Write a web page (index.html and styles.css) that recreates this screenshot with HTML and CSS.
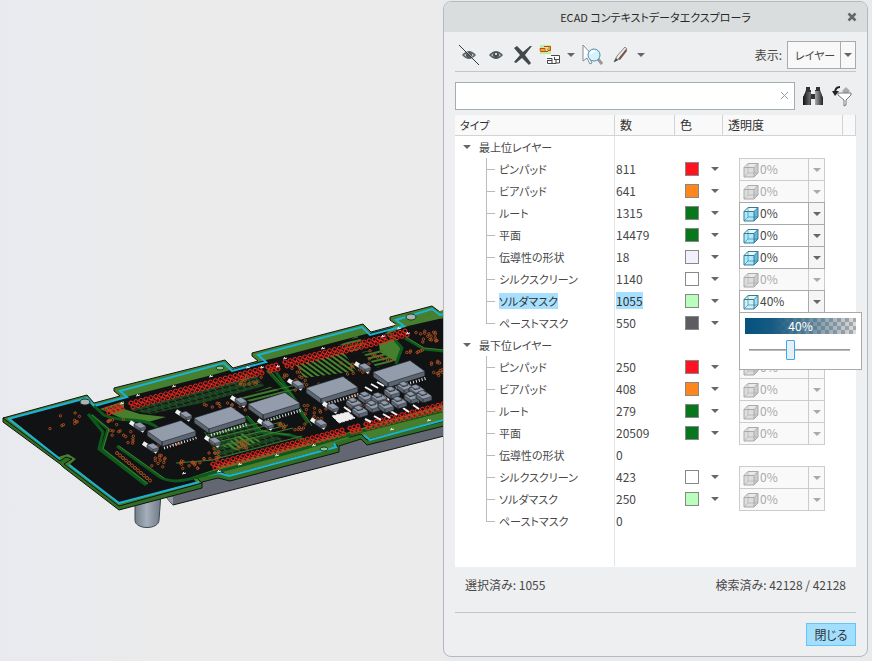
FILE: index.html
```html
<!DOCTYPE html>
<html lang="ja">
<head>
<meta charset="utf-8">
<meta name="viewport" content="width=device-width, initial-scale=1">
<title>ECAD コンテキストデータエクスプローラ</title>
<link rel="stylesheet" href="styles.css">
</head>
<body>
<svg width="0" height="0" class="defs" aria-hidden="true">
  <symbol id="cube" viewBox="0 0 16 16">
    <path d="M5 1.500h10l-4.500 4H1z" fill="var(--top)"/>
    <path d="M15 1.500v9.500l-4 4V5.500z" fill="var(--side)"/>
    <path d="M1 5.500h10V15H1z" fill="var(--front)"/>
    <path d="M5 1.500h10v9.500l-4 4H1V5.500zM1 5.500h10V15M11 5.500l4-4" fill="none" stroke="var(--edge)"/>
    <path d="M5 1.500V11h10M5 11l-4 4" fill="none" stroke="var(--edge)" opacity=".6"/>
  </symbol>
</svg>
<main class="workspace">
  <section class="scene" aria-label="基板モデル">
    <svg viewBox="0 0 444 661" preserveAspectRatio="xMinYMin slice" role="img">
      <defs>
        <linearGradient id="metal"><stop offset="0" stop-color="#747f8c"/><stop offset=".45" stop-color="#a5aebb"/><stop offset="1" stop-color="#707887"/></linearGradient>
        <pattern id="mesh" width="7" height="5" patternUnits="userSpaceOnUse" patternTransform="rotate(-15)">
          <path d="M0 1h7M0 4h7M1 0l3 5" stroke="#24652a" fill="none"/>
        </pattern>
        <pattern id="lines" width="4" height="4" patternUnits="userSpaceOnUse" patternTransform="rotate(-14)">
          <path d="M0 1h4" stroke="#3d7a2a" stroke-width="2"/>
        </pattern>
        <pattern id="rungs" width="4" height="4" patternUnits="userSpaceOnUse" patternTransform="rotate(36)">
          <path d="M0 1h4" stroke="#48862e" stroke-width="2"/>
        </pattern>
      </defs>
      <path d="M135 500v20c0 10 24 10 24 0l2-26z" fill="url(#metal)" stroke="#3e4650"/>
      <path d="M166 497l7 8 271-69v-28l-245 66z" fill="#626771" stroke="#111"/>
      <path d="M166 497l7 8v-8z" fill="#9299a4"/>
      <path d="M3 418v4L60 464L63 467L119 510L202 488V482L218 478L230 481L339 452V446L361 439L367 445L444 426V380z" fill="#306d25" stroke="#101510"/>
      <path d="M3 418L87 395L94 403L120 396L114 391V388L225 360L233 368L258 361L252 356V353L363 324L371 332L397 325L390 320V317L432 306L440 312L444 311V421L367 440L361 434L332 442L338 446L228 476L219 470L196 477L202 483L119 506L64 464L72 459L66 457L60 461z" fill="#467f2e" stroke="#101510"/>
      <path d="M10 418L86 398L93 406L130 396L216 374L262 361L275 358L362 335L398 326L415 322L444 318V404L362 428L340 435L280 452L213 470L192 477L196 482L119 503L70 464L76 459L68 454L58 457z" fill="#111214"/>
      <path d="M384 335L399 322L425 316L443 310V318L408 326z" fill="#467f2e"/>
      <path d="M100 409L124 401L124 409L140 414L166 417L148 422L121 418z" fill="#467f2e"/>
      <path d="M130 410L256 375L264 386L206 402L150 414z" fill="url(#mesh)"/>
      <path d="M240 397l30-10 24 8-28 14z" fill="url(#lines)"/>
      <path d="M204 432l42-10 39 18-67 18z" fill="url(#mesh)"/>
      <path d="M222 446l21-13 18 8-25 9z" fill="url(#rungs)"/>
      <path d="M296 365l47-13 14 19-53 7z" fill="url(#rungs)"/>
      <path d="M340 345l17-9 9 8-12 9z" fill="url(#lines)"/>
      <path d="M379 344L395 338L402 352L396 362L380 352z" fill="#467f2e"/>
      <path d="M362 352l20-3 12 12-17 7z" fill="url(#lines)"/>
      <path d="M213 467L340 434L350 438L268 461L230 471z" fill="#467f2e"/>
      <path d="M368 431L444 411V417L376 434z" fill="#467f2e"/>
      <path d="M8 419L87 398L94 406L127 397L120 391L224 363L232 371L266 362L258 355L362 327L370 335L404 326L396 320L432 309L440 315L444 314" fill="none" stroke="#1ab2d8" stroke-width="2"/>
      <path d="M9 419L60 459M69 465L119 503L199 482M208 475L219 473L229 476L336 447L334 443M364 435L370 440L444 420" fill="none" stroke="#1ab2d8" stroke-width="2"/>
      <g fill="none" stroke="#0d591b" stroke-width="3">
        <path d="M91 415l17 14-6 20 45 35"/><path d="M88 414l15 18-4 17 47 36"/>
        <path d="M117 446l43 31c14 8 30 2 45-2l97-26 60-18 80-20"/>
        <path d="M94 406l10 9c18 9 40 0 55 14M267 370l21 23 20 30M276 372l22 32M246 416l14 16 30 3 27 9M390 334l12 14-6 16M405 338l19 11 20 2"/>
      </g>
      <g fill="none" stroke="#3f7d30">
        <path d="M92 415l17 14-6 20 45 35M119 446l45 32M269 370l22 24 21 32M406 337l18 11 20 2M248 416l14 15 28 4M212 460l90-24M176 463l37-3"/>
        <path d="M208 435l72-17M210 439l72-17M213 443l75-18M216 447l77-19M270 391l35-8M275 394l30-7"/>
      </g>
      <g id="pads" fill="none"></g>
      <g id="parts" stroke="#15191e" stroke-linejoin="round"></g>
      <g fill="#aab3b8" stroke="#173c1c"><ellipse cx="85" cy="402" rx="5" ry="3"/><ellipse cx="220" cy="368" rx="4" ry="2" fill="#8bc292"/><ellipse cx="324" cy="449" rx="4" ry="2" fill="#8bc292"/><ellipse cx="411" cy="317" rx="5" ry="3"/></g>
    </svg>
  </section>

  <section class="dialog" role="dialog" aria-labelledby="dialog-title">
    <header class="titlebar">
      <h1 id="dialog-title">ECAD コンテキストデータエクスプローラ</h1>
      <button class="icon-button window-close" aria-label="ウィンドウを閉じる"><svg width="10" height="10"><path d="M1.500 1.500l7 7m0-7l-7 7" stroke="#666" stroke-width="2.500"/></svg></button>
    </header>
    <div class="content">
      <div class="toolbar">
        <button class="icon-button" aria-label="非表示"><svg width="22" height="22" viewBox="0 0 22 22"><path d="M4 11q7-8 14 0-7 8-14 0" fill="#5d6367"/><path d="M6 11q5-5 10 0-5 5-10 0" fill="#bfc5c8"/><circle cx="11" cy="11" r="3" fill="#50565a"/><path d="M3 2l18 19" stroke="#eef0f1" stroke-width="1"/><path d="M1 1l20 20" stroke="#34383a"/></svg></button>
        <button class="icon-button" aria-label="表示"><svg width="22" height="22" viewBox="0 0 22 22"><path d="M4 11q7-8 14 0-7 8-14 0" fill="#555d62"/><path d="M6 11q5-5 10 0-5 5-10 0" fill="#b5bcc0"/><circle cx="11" cy="11" r="3" fill="#4a5155"/><circle cx="11" cy="10" r="1" fill="#fff"/></svg></button>
        <button class="icon-button" aria-label="削除"><svg width="22" height="22" viewBox="0 0 22 22"><path d="M2 4l3-2 6 6 7-6 2 0-7 9 6 8-2 2-7-7-6 5-2-1 6-7z" fill="#45484b"/></svg></button>
        <button class="icon-button with-menu" aria-label="選択方法"><svg width="22" height="22" viewBox="0 0 22 22"><path d="M1 1h11v9H1z" fill="#bfeaa8"/><path d="M5 2.500h6.500v4H9v-2M1 4.500h5v3H1.500zM6 7.500h3" fill="none" stroke="#c84a08"/><path d="M2 5h3v2H2zM9 3h2v3H9z" fill="#f2a72e"/><path d="M7 11h14v10H7z" fill="#fafafa"/><path d="M12 11.500h8.500v4H15M8 14.500h5v5H8.500v-3M13 19.500h4v-4M8 16.500h5M15.500 13v2.500M20.500 15v4H17" fill="none" stroke="#47484b"/></svg><i class="arrow"></i></button>
        <button class="icon-button" aria-label="検索して選択"><svg width="22" height="22" viewBox="0 0 22 22"><path d="M1 1v16l4-3 3 6 2-1-3-6h5z" fill="#fff" stroke="#858b90"/><path d="M16 15l4 5" stroke="#999" stroke-width="3"/><circle cx="12" cy="11" r="6" fill="#d5f3fa" stroke="#4a8faf"/><path d="M9 10q1-3 4-3" fill="none" stroke="#fff" stroke-width="2"/></svg></button>
        <button class="icon-button with-menu" aria-label="編集"><svg width="22" height="22" viewBox="0 0 22 22"><path d="M5 18l3-6 8-9 2 2-8 10z" fill="#e9e9e9" stroke="#888"/><path d="M9 15l8-10 1 2-7 9z" fill="#75564b"/><path d="M5 18l2-4 2 2z" fill="#444"/></svg><i class="arrow"></i></button>
        <label class="view-label" for="view">表示:</label>
        <span class="dropdown view"><select id="view"><option>レイヤー</option></select><i class="arrow"></i></span>
      </div>
      <div class="search-row">
        <div class="search"><input type="text" aria-label="検索"><button class="icon-button" aria-label="クリア"><svg width="10" height="10"><path d="M1 1l7 7m0-7L1 8" stroke="#9aa0a3"/></svg></button></div>
        <button class="icon-button" aria-label="検索"><svg width="22" height="22" viewBox="0 0 22 22"><defs><linearGradient id="lens"><stop stop-color="#111"/><stop offset=".6" stop-color="#aaa"/><stop offset="1" stop-color="#222"/></linearGradient></defs><path d="M4 2h4v3h1v4h4V5h1V2h4v3l3 8v7h-8v-6H9v6H1v-7l3-8z" fill="#333"/><path d="M1 12l3-5h5l-1 13H1zM13 10V6h5l3 7v7h-8z" fill="url(#lens)"/></svg></button>
        <button class="icon-button" aria-label="フィルタ"><svg width="22" height="22" viewBox="0 0 22 22"><path d="M11 6l4-4 4 4-2 2h-4z" fill="#aaa"/><path d="M7 8h13v2l-5 5v5l-2 1v-6L7 10z" fill="#fff" stroke="#777"/><path d="M9 2Q4 2 4 8" fill="none" stroke="#222" stroke-width="2"/><path d="M1 6h7l-4 5z" fill="#222"/></svg></button>
      </div>
      <div class="grid">
        <table>
          <colgroup><col class="c-type"><col class="c-count"><col class="c-color"><col class="c-alpha"><col></colgroup>
          <thead><tr><th>タイプ</th><th>数</th><th>色</th><th>透明度</th><th></th></tr></thead>
          <tbody id="rows"></tbody>
        </table>
      </div>
      <div class="status"><span>選択済み: 1055</span><span>検索済み: 42128 / 42128</span></div>
      <footer><button class="close">閉じる</button></footer>
    </div>
  </section>
</main>
<script src="board.js"></script>
<script src="table.js"></script>
</body>
</html>
```
FILE: styles.css
```css
* { box-sizing: border-box; }
body {
  margin: 0;
  background: #e9eaec;
  color: #484848;
  font: 12px/16px "Noto Sans CJK JP", sans-serif;
  font-feature-settings: "palt";
}
button, input, select { font: inherit; color: inherit; font-feature-settings: inherit; }
button { padding: 0; }
.defs { position: absolute; }
.workspace { display: flex; min-height: 100vh; align-items: flex-start; }
.scene { flex: 1 1 0; min-width: 0; overflow: hidden; background: linear-gradient(90deg, #e8eaef, #ebebeb 40%); height: 100vh; }
.scene svg { display: block; width: 100%; height: 100%; }
.dialog {
  flex: 0 1 425px;
  margin: 1px 4px 3px 0;
  border: 1px solid #b5b9bd;
  border-radius: 8px;
  background: #eeeff1;
  overflow: hidden;
}
.titlebar { display: flex; align-items: center; height: 30px; padding: 0 10px 0 20px; background: #dadddd; color: #282828; }
.titlebar h1 { flex: 1; margin: 0; text-align: center; font-size: 11px; font-weight: 400; }
.icon-button { display: inline-flex; align-items: center; justify-content: center; border: 0; background: none; flex: none; }
.icon-button svg { display: block; }
.content { padding: 0 11px; }
.toolbar { display: flex; align-items: center; gap: 5px; height: 40px; padding: 7px 0 0 3px; border-bottom: 1px solid #c2c6c8; }
.with-menu { gap: 6px; margin-right: 2px; }
.arrow { width: 0; height: 0; border: 4px solid transparent; border-top-color: #666; border-bottom: 0; }
.view-label { margin-left: auto; }
.dropdown { position: relative; display: inline-flex; align-items: center; }
.dropdown select { appearance: none; width: 100%; height: 100%; border: 1px solid #aaa; border-radius: 0; outline: 0; }
.dropdown .arrow { position: absolute; right: 4px; pointer-events: none; }
.view { width: 69px; height: 28px; margin-bottom: 1px; }
.view select { padding: 0 16px 0 7px; font-size: 11px; background: linear-gradient(90deg, transparent calc(100% - 15px), #aaa 0, #aaa calc(100% - 14px), transparent 0) #f8f8f8; }
.search-row { display: flex; align-items: center; gap: 7px; padding: 10px 3px 5px 0; }
.search { flex: 1; display: flex; height: 28px; border: 1px solid #a2afb2; background: #fff; padding-right: 4px; }
.search input { flex: 1; min-width: 0; border: 0; outline: 0; background: none; }
.grid { min-height: 452px; background: #fff; }
table { width: 100%; table-layout: fixed; border-collapse: separate; border-spacing: 0; }
.c-type { width: 160px; }
.c-count { width: 60px; }
.c-color { width: 48px; }
.c-alpha { width: 120px; }
th { height: 21px; padding: 0 5px; border-right: 1px solid #d0d4d4; border-bottom: 1px solid #d0d4d4; background: #f9f9f9; color: #303030; text-align: left; font-weight: 400; }
td { height: 22px; padding: 0 1px; white-space: nowrap; }
td:first-child { border-right: 1px solid #e2e5e7; }
.filler td { height: 34px; }
th:first-child { font-size: 11px; }
.group-label { display: flex; align-items: center; gap: 8px; padding-left: 7px; font-size: 11px; }
.tree-item { display: flex; align-items: center; height: 22px; padding-left: 30px; font-size: 11px; }
.branch { flex: none; width: 12px; height: 22px; margin-right: 1px; background: linear-gradient(#bbb, #bbb) 0 0 / 1px 100% no-repeat, linear-gradient(#bbb, #bbb) 0 11px / 9px 1px no-repeat; }
.last .branch { background-size: 1px 11px, 9px 1px; }
.selected mark { background: #a7dfff; color: #303030; }
mark { background: none; color: inherit; }
.color-button { display: flex; align-items: center; gap: 12px; margin-left: 9px; border: 0; background: none; }
.swatch { width: 14px; height: 14px; border: 1px solid #888; }
.alpha { padding-left: 16px; }
.alpha-box { width: 86px; height: 23px; margin-bottom: -1px; vertical-align: top; --top: #e5fbff; --side: #62b9dc; --front: #aceaff; --edge: #397a91; }
.alpha-box svg { position: absolute; left: 4px; width: 16px; height: 16px; pointer-events: none; }
.alpha-box select { padding: 0 16px 2px 20px; background: linear-gradient(90deg, transparent calc(100% - 16px), #aaa 0, #aaa calc(100% - 15px), #f5f5f5 0) #fff; }
.alpha-box.disabled { --top: #e9e9e9; --side: #ccc; --front: #ddd; --edge: #aaa; }
.disabled select { opacity: 1; color: #aaa; border-color: #ccc; background: linear-gradient(90deg, transparent calc(100% - 16px), #ccc 0, #ccc calc(100% - 15px), transparent 0) #f9f9f9; }
.disabled .arrow { border-top-color: #aaa; }
.alpha-box:not(.disabled) { z-index: 1; }
.alpha-box.open { z-index: 3; --top: #dff6fb; --side: #a9dff0; --front: #cdf1fb; }
.popup { position: absolute; top: 22px; left: 0; width: 123px; height: 58px; padding: 5px; border: 1px solid #aaa; background: #fff; }
.meter { display: block; height: 16px; color: #fff; text-align: center; background: linear-gradient(90deg, #04527f, #175b83 25%, #285f8199 60%, #6a7f9500), repeating-conic-gradient(#aaa 0 25%, #ddd 0 50%) 0 0 / 8px 8px; }
.popup input { appearance: none; display: block; width: 101px; height: 20px; margin: 6px 4px; background: linear-gradient(#888, #ccc) 0 9px / 100% 2px no-repeat; }
.popup input::-webkit-slider-thumb { appearance: none; width: 9px; height: 20px; border: 1px solid #39a9ec; border-radius: 1px; background: #e5f0f6; }
.status { display: flex; justify-content: space-between; padding: 10px 10px 19px; border-bottom: 1px solid #c2c4c7; }
footer { display: flex; justify-content: flex-end; padding: 10px 0; }
.close { width: 50px; height: 23px; border: 1px solid #66c4f7; background: #a2dfff; color: #333; }
```
FILE: board.js
```js
const pads = document.getElementById('pads');
const parts = document.getElementById('parts');
let seed = 7;
const rnd = () => (seed = (seed * 16807) % 2147483647) / 2147483647;
const add = (parent, d, attrs = {}) => {
  const p = document.createElementNS('http://www.w3.org/2000/svg', 'path');
  p.setAttribute('d', d);
  for (const k in attrs) p.setAttribute(k, attrs[k]);
  parent.append(p);
};
const ring = (x, y, r) => `M${x - r} ${y}a${r} ${r} 0 1 0 ${2 * r} 0a${r} ${r} 0 1 0 ${-2 * r} 0`;

// Connector rows: two staggered lines of red pads
[[107, 409, 120, 405], [131, 403, 260, 369], [268, 367, 276, 365], [285, 362, 384, 337], [390, 335, 405, 331],
 [213, 464, 342, 430], [350, 428, 358, 426], [366, 424, 443, 404]].forEach(([x1, y1, x2, y2]) => {
  const n = Math.max(2, Math.round((x2 - x1) / 5));
  for (let i = 0; i <= n; i++) {
    const x = x1 + (x2 - x1) * i / n, y = y1 + (y2 - y1) * i / n;
    add(pads, `M${x - 3} ${y}l7 4`, { stroke: '#6b1712', 'stroke-width': 2 });
    add(pads, ring(x, y, 2) + ring(x + 2, y + 4, 2), { stroke: '#f5281e' });
  }
});
// Clusters of vias: centre, spread, count
[[68, 421, 18, 9, 10], [122, 435, 13, 10, 13], [112, 422, 14, 3, 7], [158, 460, 8, 9, 12], [190, 465, 10, 4, 14],
 [252, 380, 12, 5, 12], [292, 373, 10, 5, 9], [220, 406, 26, 4, 14], [170, 444, 20, 4, 9], [292, 427, 14, 3, 12],
 [305, 385, 14, 6, 11], [355, 369, 14, 6, 10], [375, 355, 18, 5, 9], [427, 337, 11, 6, 18], [436, 369, 7, 8, 12],
 [415, 352, 9, 2, 7], [229, 445, 20, 4, 12], [315, 412, 12, 7, 12], [385, 403, 36, 8, 18], [210, 455, 12, 5, 12]
].forEach(([x, y, w, h, n]) => {
  for (let i = 0; i < n; i++) add(pads, ring(x + (rnd() * 2 - 1) * w, y + (rnd() * 2 - 1) * h, 1.2), { stroke: '#a94f20' });
});
for (let i = 0; i < 12; i++) add(pads, ring(117 + i * 3, 453 + i * 2.5, 1.5), { stroke: '#a94f20' });
// Silkscreen marks
[[138, 395], [174, 386], [211, 376], [248, 367], [285, 358], [323, 348], [399, 328], [240, 464], [277, 455], [314, 445], [392, 429], [429, 420], [219, 471], [184, 473], [122, 403], [262, 367], [278, 366], [383, 336], [408, 333]]
  .forEach(([x, y]) => add(pads, `M${x - 2} ${y + 1}l4-1M${x - 1} ${y - 1}l2 2`, { stroke: '#e5e5e5' }));

const block = (x, y, w, d, h, line = 1) => {
  const s = w * .31;
  const tip = d * .72;
  add(parts, `M${x} ${y}l${w}${-s}l${d} ${tip}v${h}l${-w} ${s}l${-d}${-tip}z`, { fill: '#5c6470', 'stroke-width': line });
  add(parts, `M${x} ${y}l${w}${-s}l${d} ${tip}l${-w} ${s}z`, { fill: '#929cab', 'stroke-width': line / 2 });
  add(parts, `M${x + d} ${y + tip}v${h}`, { 'stroke-width': line });
};
// Integrated circuits with their pin rows
[[147, 431], [194, 418], [248, 404], [306, 388], [373, 372]].forEach(([x, y], i) => {
  const w = i ? 37 : 34;
  add(parts, `M${x + 17} ${y + 17}l${w}-11`, { stroke: '#e2e4e5', 'stroke-width': 3, 'stroke-dasharray': '1 2' });
  block(x, y, w, 15, 5);
});
// Small passives
[[134, 424], [147, 445], [180, 413], [209, 439], [235, 399], [262, 422], [292, 382], [315, 421], [327, 405], [359, 365]].forEach(([x, y]) => {
  add(parts, `M${x - 4} ${y - 2}l14 9`, { stroke: '#eef0f0', 'stroke-width': 4 });
  block(x, y, 6, 6, 3, .6);
});
// Capacitor bank beside the two right-hand chips
add(parts, 'M332 416l16-4 7 6-16 5z', { fill: '#eee', stroke: '#ddd', 'stroke-dasharray': '3 1' });
add(parts, 'M365 387l7 4M371 384l7 4M377 382l7 4M365 419l6 3M374 416l7 4M383 414l7 4M403 408l6 4M413 405l6 4M344 407l7 5M359 398l6 4M380 394l9 6M410 397l9 5M389 410l8 5', { stroke: '#f4f4f4', 'stroke-width': 2 });
[[346, 401], [358, 395], [371, 396], [352, 409], [365, 404], [378, 404], [384, 390], [397, 385], [409, 388], [391, 400], [404, 395], [416, 394]]
  .forEach(([x, y]) => { block(x, y, 9, 7, 4, .7); block(x + 2, y - 2, 5, 4, 1, .5); });
```
FILE: table.js
```js
const RED = '#ff1320', ORANGE = '#ff861c', GREEN = '#08761d', MINT = '#b8ffbd';
// name, count, colour, opacity, enabled
const groups = [
  ['最上位レイヤー', [
    ['ピンパッド', 811, RED, 0, false], ['ビアパッド', 641, ORANGE, 0, false], ['ルート', 1315, GREEN, 0, true],
    ['平面', 14479, GREEN, 0, true], ['伝導性の形状', 18, '#f0f0ff', 0, true], ['シルクスクリーン', 1140, '#fff', 0, false],
    ['ソルダマスク', 1055, MINT, 40, true], ['ペーストマスク', 550, '#5c5c61', null]]],
  ['最下位レイヤー', [
    ['ピンパッド', 250, RED, 0, false], ['ビアパッド', 408, ORANGE, 0, false], ['ルート', 279, GREEN, 0, false],
    ['平面', 20509, GREEN, 0, false], ['伝導性の形状', 0], ['シルクスクリーン', 423, '#fff', 0, false],
    ['ソルダマスク', 250, MINT, 0, false], ['ペーストマスク', 0]]]
];
const popup = '<div class="popup"><span class="meter">40%</span><input type="range" min="0" max="100" value="40" aria-label="透明度の値"></div>';
const colorCell = (name, c) => c ? `<button class="color-button" aria-label="${name}の色"><i class="swatch" style="background:${c}"></i><i class="arrow"></i></button>` : '';
const alphaCell = (name, a, on) => a == null ? '' :
  `<span class="dropdown alpha-box ${on ? '' : 'disabled'} ${a ? 'open' : ''}"><select aria-label="${name}の透明度" ${on ? '' : 'disabled'}><option>${a}%</option></select><svg><use href="#cube"/></svg><i class="arrow"></i>${a ? popup : ''}</span>`;
let html = '';
for (const [title, layers] of groups) {
  html += `<tr><td><div class="group-label"><i class="arrow"></i>${title}</div></td><td></td><td></td><td></td><td></td></tr>`;
  layers.forEach(([name, count, color, alpha, on], i) => {
    html += `<tr class="${alpha ? 'selected' : ''} ${i === layers.length - 1 ? 'last' : ''}">
      <td><div class="tree-item"><i class="branch"></i><mark>${name}</mark></div></td><td><mark>${count}</mark></td>
      <td>${colorCell(name, color)}</td><td class="alpha">${alphaCell(name, alpha, on)}</td><td></td></tr>`;
  });
}
html += '<tr class="filler"><td></td><td></td><td></td><td></td><td></td></tr>';
document.getElementById('rows').innerHTML = html;
```
